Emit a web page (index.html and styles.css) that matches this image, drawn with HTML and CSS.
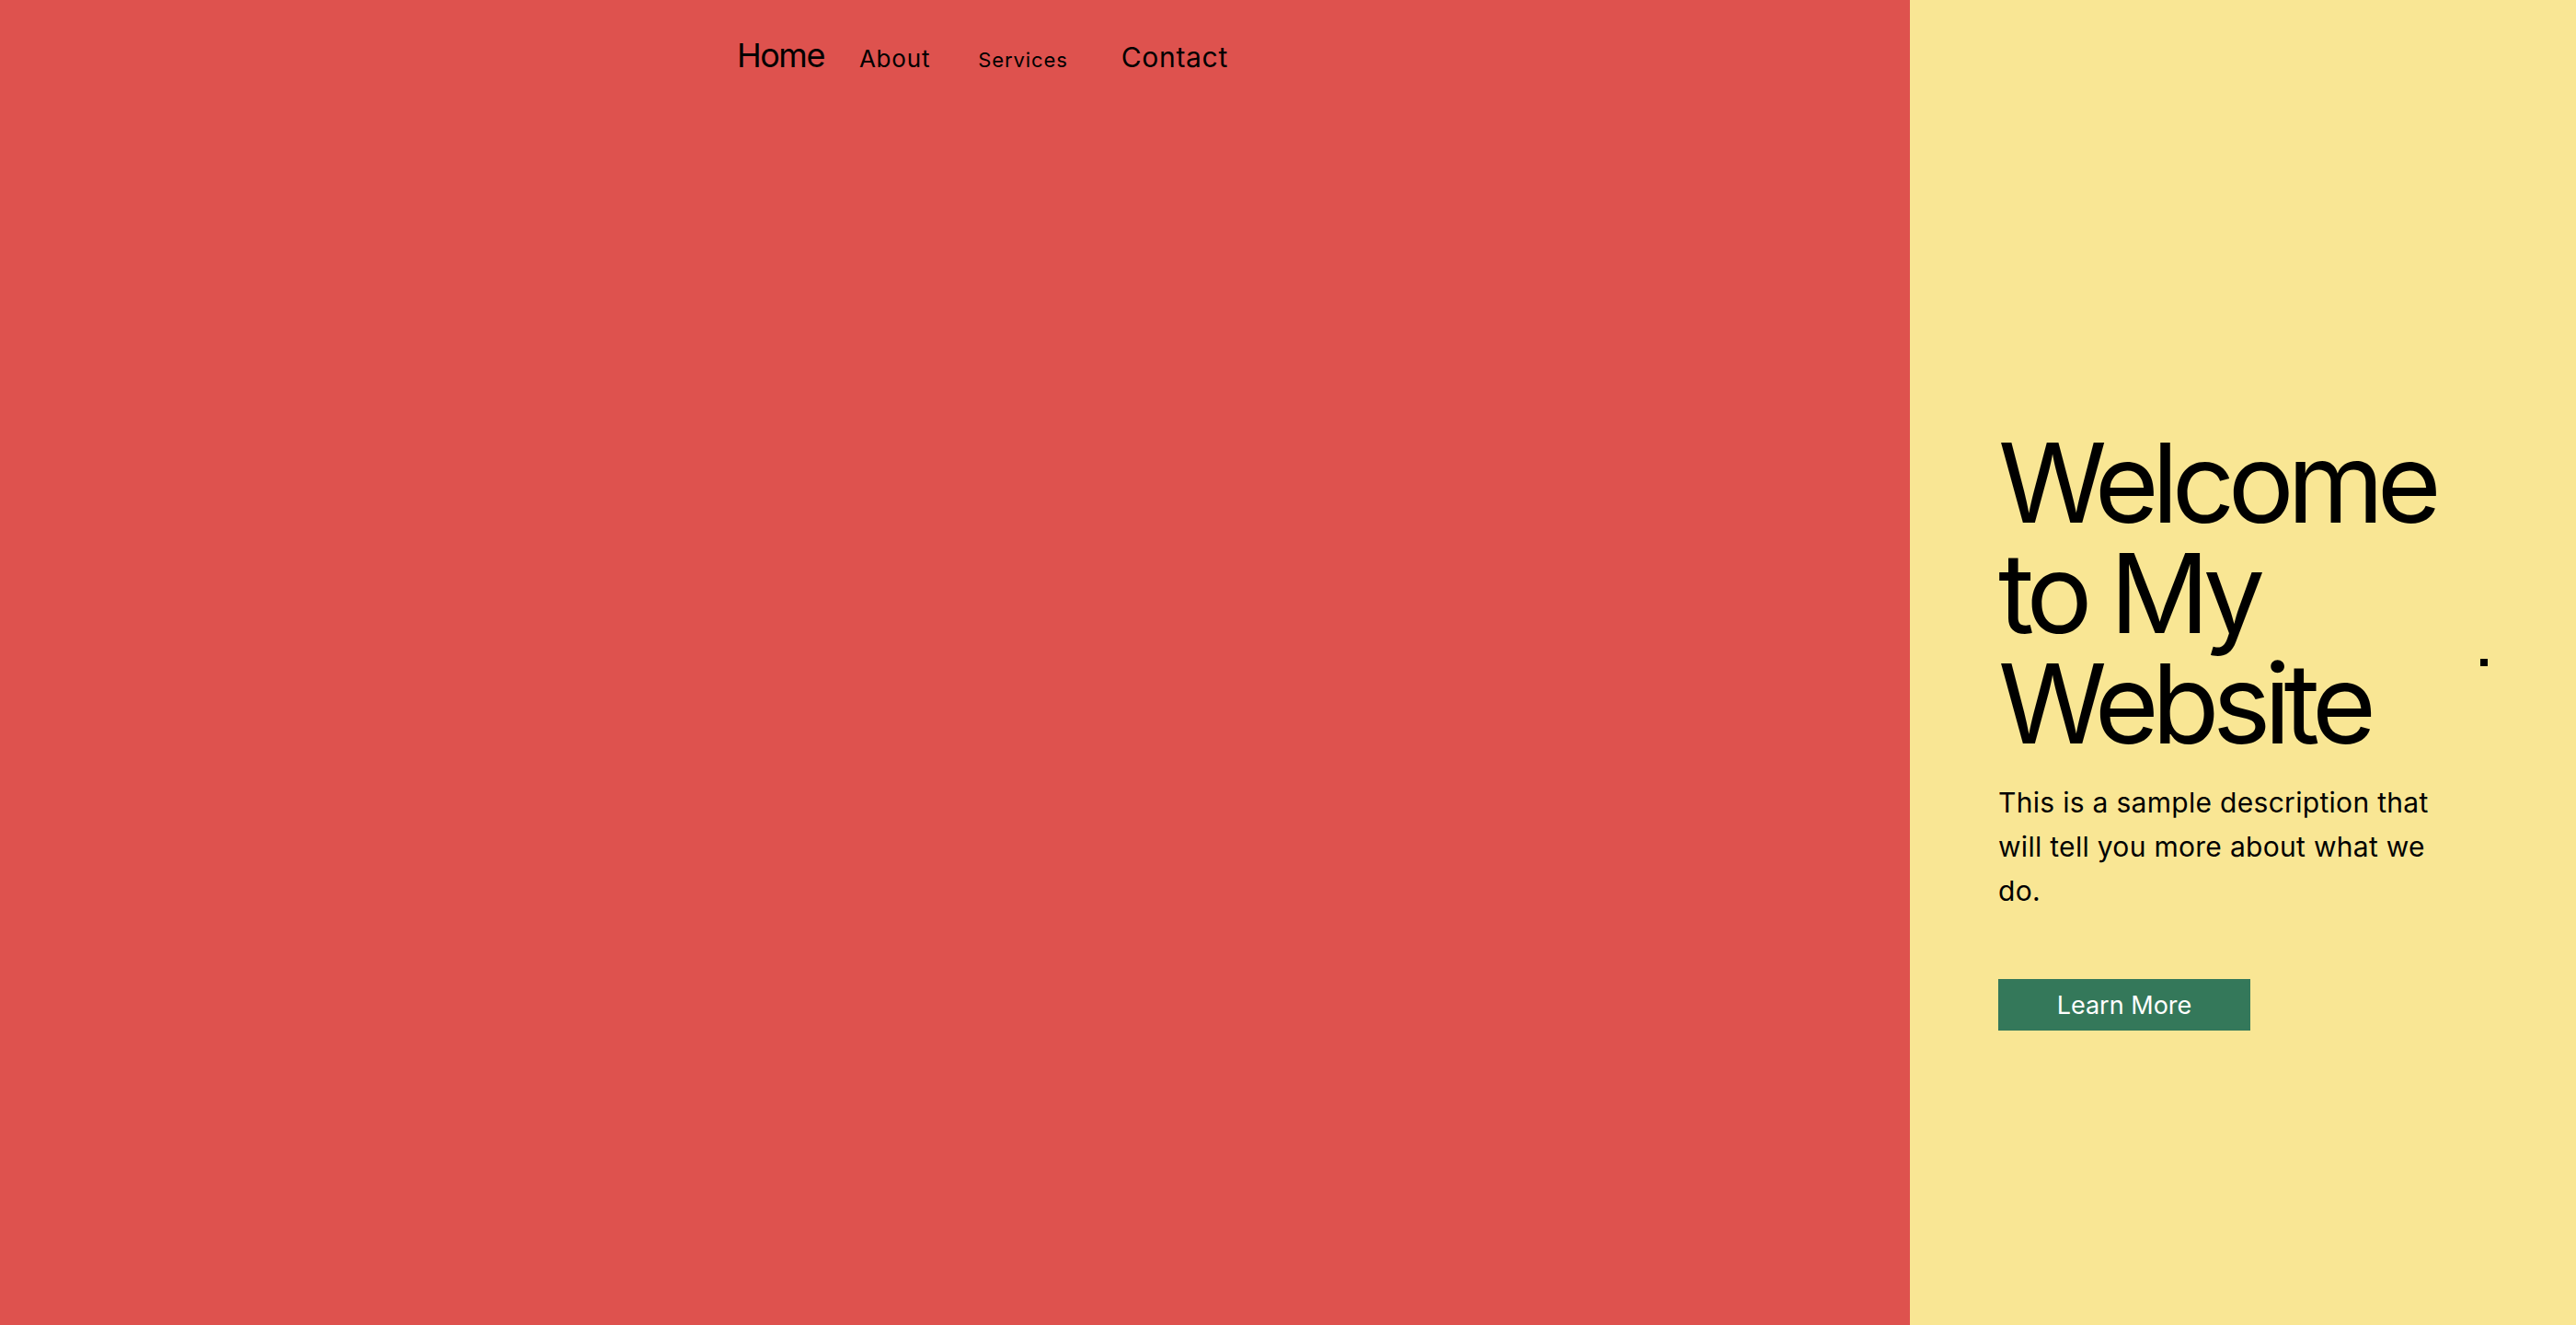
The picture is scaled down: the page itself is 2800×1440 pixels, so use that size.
FILE: index.html
```html
<!DOCTYPE html>
<html lang="en">
<head>
<meta charset="utf-8">
<title>My Website</title>
<link rel="stylesheet" href="styles.css">
</head>
<body>
<div class="page">
  <section class="left">
    <nav class="nav">
      <a class="nav-link nav-home" href="#">Home</a>
      <a class="nav-link nav-about" href="#">About</a>
      <a class="nav-link nav-services" href="#">Services</a>
      <a class="nav-link nav-contact" href="#">Contact</a>
    </nav>
  </section>
  <section class="right">
    <div class="hero">
      <h1 class="hero-title">Welcome to My Website</h1>
      <p class="hero-text">This is a sample description that will tell you more about what we do.</p>
      <a class="hero-btn" href="#">Learn More</a>
    </div>
    <span class="dot"></span>
  </section>
</div>
</body>
</html>
```

FILE: styles.css
```css
html, body {
  margin: 0;
  padding: 0;
  height: 100%;
}
body {
  font-family: Inter, "Noto Sans", "Liberation Sans", sans-serif;
  color: #000;
}
.page {
  display: flex;
  height: 100vh;
}
.left {
  flex: 0 0 2076px;
  background: #de524e;
}
.nav {
  display: flex;
  align-items: baseline;
  padding: 38px 0 0 801px;
}
.nav-link {
  color: #000;
  text-decoration: none;
  line-height: normal;
}
.nav-home { font-size: 36px; letter-spacing: -1.5px; }
.nav-about { font-size: 26px; letter-spacing: 0.8px; margin-left: 38px; }
.nav-services { font-size: 22px; letter-spacing: 0.9px; margin-left: 52px; }
.nav-contact { font-size: 30px; letter-spacing: 0.7px; margin-left: 58px; }

.right {
  flex: 1;
  background: #f9e694;
  display: flex;
  align-items: center;
  padding: 0 96px;
}
.hero {
  align-self: flex-start;
  width: 490px;
  padding-top: 465px;
}
.hero-title {
  margin: 0;
  font-size: 120px;
  line-height: 1;
  font-weight: 400;
  letter-spacing: -7.5px;
}
.hero-text {
  margin: 23px 0 72px;
  font-size: 30px;
  line-height: 48px;
  letter-spacing: 0.3px;
}
.hero-btn {
  display: inline-flex;
  align-items: center;
  justify-content: center;
  width: 274px;
  height: 56px;
  background: #34785a;
  color: #fff;
  text-decoration: none;
  font-size: 27px;
}
.dot {
  margin-left: auto;
  width: 8px;
  height: 8px;
  background: #000;
}
```
